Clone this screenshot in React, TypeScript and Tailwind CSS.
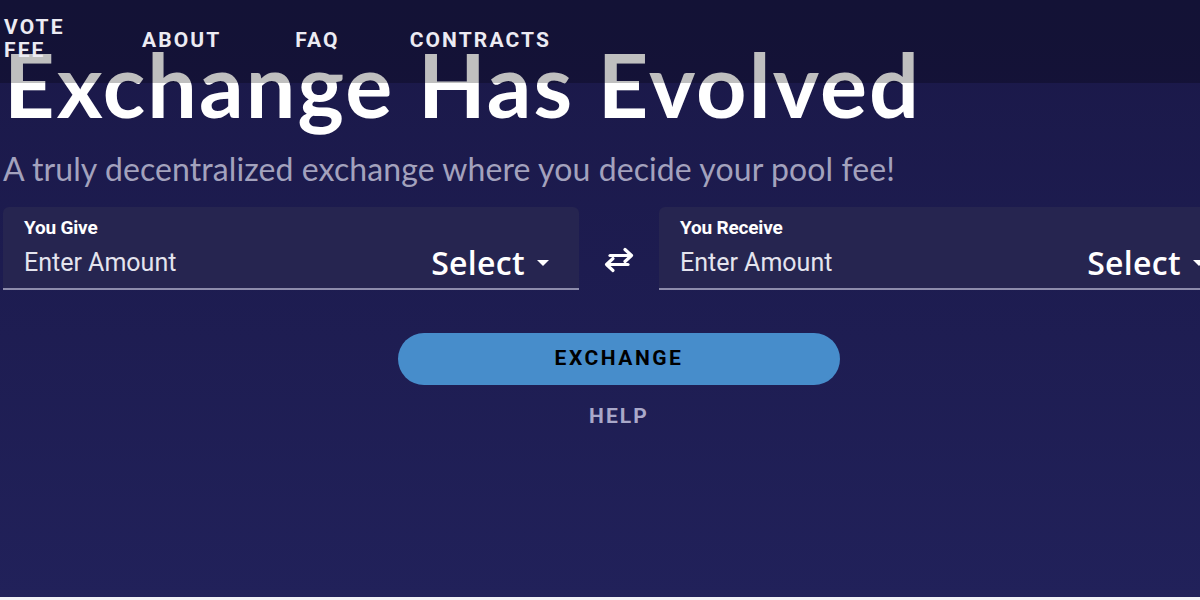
const navItems = [
  {label: 'ABOUT', ml: 'ml-[72px]'},
  {label: 'FAQ', ml: 'ml-[74px]'},
  {label: 'CONTRACTS', ml: 'ml-[70px]'}
]

function SwapIcon() {
  return (
    <svg width="34" height="26" viewBox="0 0 34 26" fill="none" className="shrink-0">
      {/* top arrow, pointing right */}
      <path d="M8 8.5H28" stroke="white" strokeWidth="3.2" strokeLinecap="round" />
      <path d="M23 2.5L29.5 8.5L23 14.5" stroke="white" strokeWidth="3.2" strokeLinecap="round" strokeLinejoin="round" />
      {/* bottom arrow, pointing left */}
      <path d="M26 17.5H6" stroke="white" strokeWidth="3.2" strokeLinecap="round" />
      <path d="M11 11.5L4.5 17.5L11 23.5" stroke="white" strokeWidth="3.2" strokeLinecap="round" strokeLinejoin="round" />
    </svg>
  )
}

function TokenField({label}: {label: string}) {
  return (
    <div className="flex flex-col w-[576px] shrink-0 h-[83px] pt-[10px] px-[21px] bg-[#262550] rounded-t-md border-b-2 border-[#8d8cab]">
      <span className="text-[19px] font-bold text-white font-['Roboto',sans-serif] leading-[22px] tracking-[-0.01em]">
        {label}
      </span>
      <div className="flex items-center justify-between mt-[8px]">
        <span className="text-[25px] text-[#e4e4ee] font-['Roboto',sans-serif] leading-8">
          Enter Amount
        </span>
        <button className="flex items-center gap-[12px] pr-[9px] text-white">
          <span className="text-[32px] font-semibold font-['Open_Sans',sans-serif] leading-8 tracking-[0.01em]">
            Select
          </span>
          <span className="w-0 h-0 border-l-[6.5px] border-r-[6.5px] border-t-[6px] border-l-transparent border-r-transparent border-t-white" />
        </button>
      </div>
    </div>
  )
}

export default function App() {
  return (
    <div className="relative w-full min-h-[600px] overflow-hidden bg-gradient-to-b from-[#1a1848] to-[#21215a] font-['Roboto',sans-serif]">
      {/* nav bar sits over the title */}
      <nav className="absolute top-0 left-0 right-0 z-10 h-[83px] bg-black/25">
        <div className="flex items-start pl-[4px] pt-[16px] text-[#ecebf3] text-[21px] font-bold tracking-[0.1em] leading-[23px]">
          <a className="w-[66px]">VOTE FEE</a>
          <div className="flex items-center mt-[13px]">
            {navItems.map(item => (
              <a key={item.label} className={item.ml}>
                {item.label}
              </a>
            ))}
          </div>
        </div>
      </nav>

      <main className="flex flex-col w-[1232px] ml-[3px] pt-[34px]">
        <h1 className="pl-[1px] text-[88px] leading-[100px] font-bold text-white font-['Lato',sans-serif] tracking-[0.024em]">
          Exchange Has Evolved
        </h1>
        <p className="mt-[15px] text-[32px] leading-[40px] text-[#a3a2bd] font-['Lato',sans-serif] font-normal tracking-[0.003em]">
          A truly decentralized exchange where you decide your pool fee!
        </p>

        <div className="flex items-center mt-[18px]">
          <TokenField label="You Give" />
          <div className="flex justify-center w-[80px] shrink-0 pt-[22px]">
            <SwapIcon />
          </div>
          <TokenField label="You Receive" />
        </div>

        <div className="flex flex-col items-center mt-[43px]">
          <button className="w-[442px] h-[52px] rounded-full bg-[#478dcb] text-black text-[21px] font-bold tracking-[0.12em]">
            EXCHANGE
          </button>
          <a className="mt-[16px] text-[21px] font-bold tracking-[0.1em] text-[#a9a8c9]">HELP</a>
        </div>
      </main>

      <div className="absolute bottom-0 left-0 right-0 h-[3px] bg-[#f2f2f6]" />
    </div>
  )
}
